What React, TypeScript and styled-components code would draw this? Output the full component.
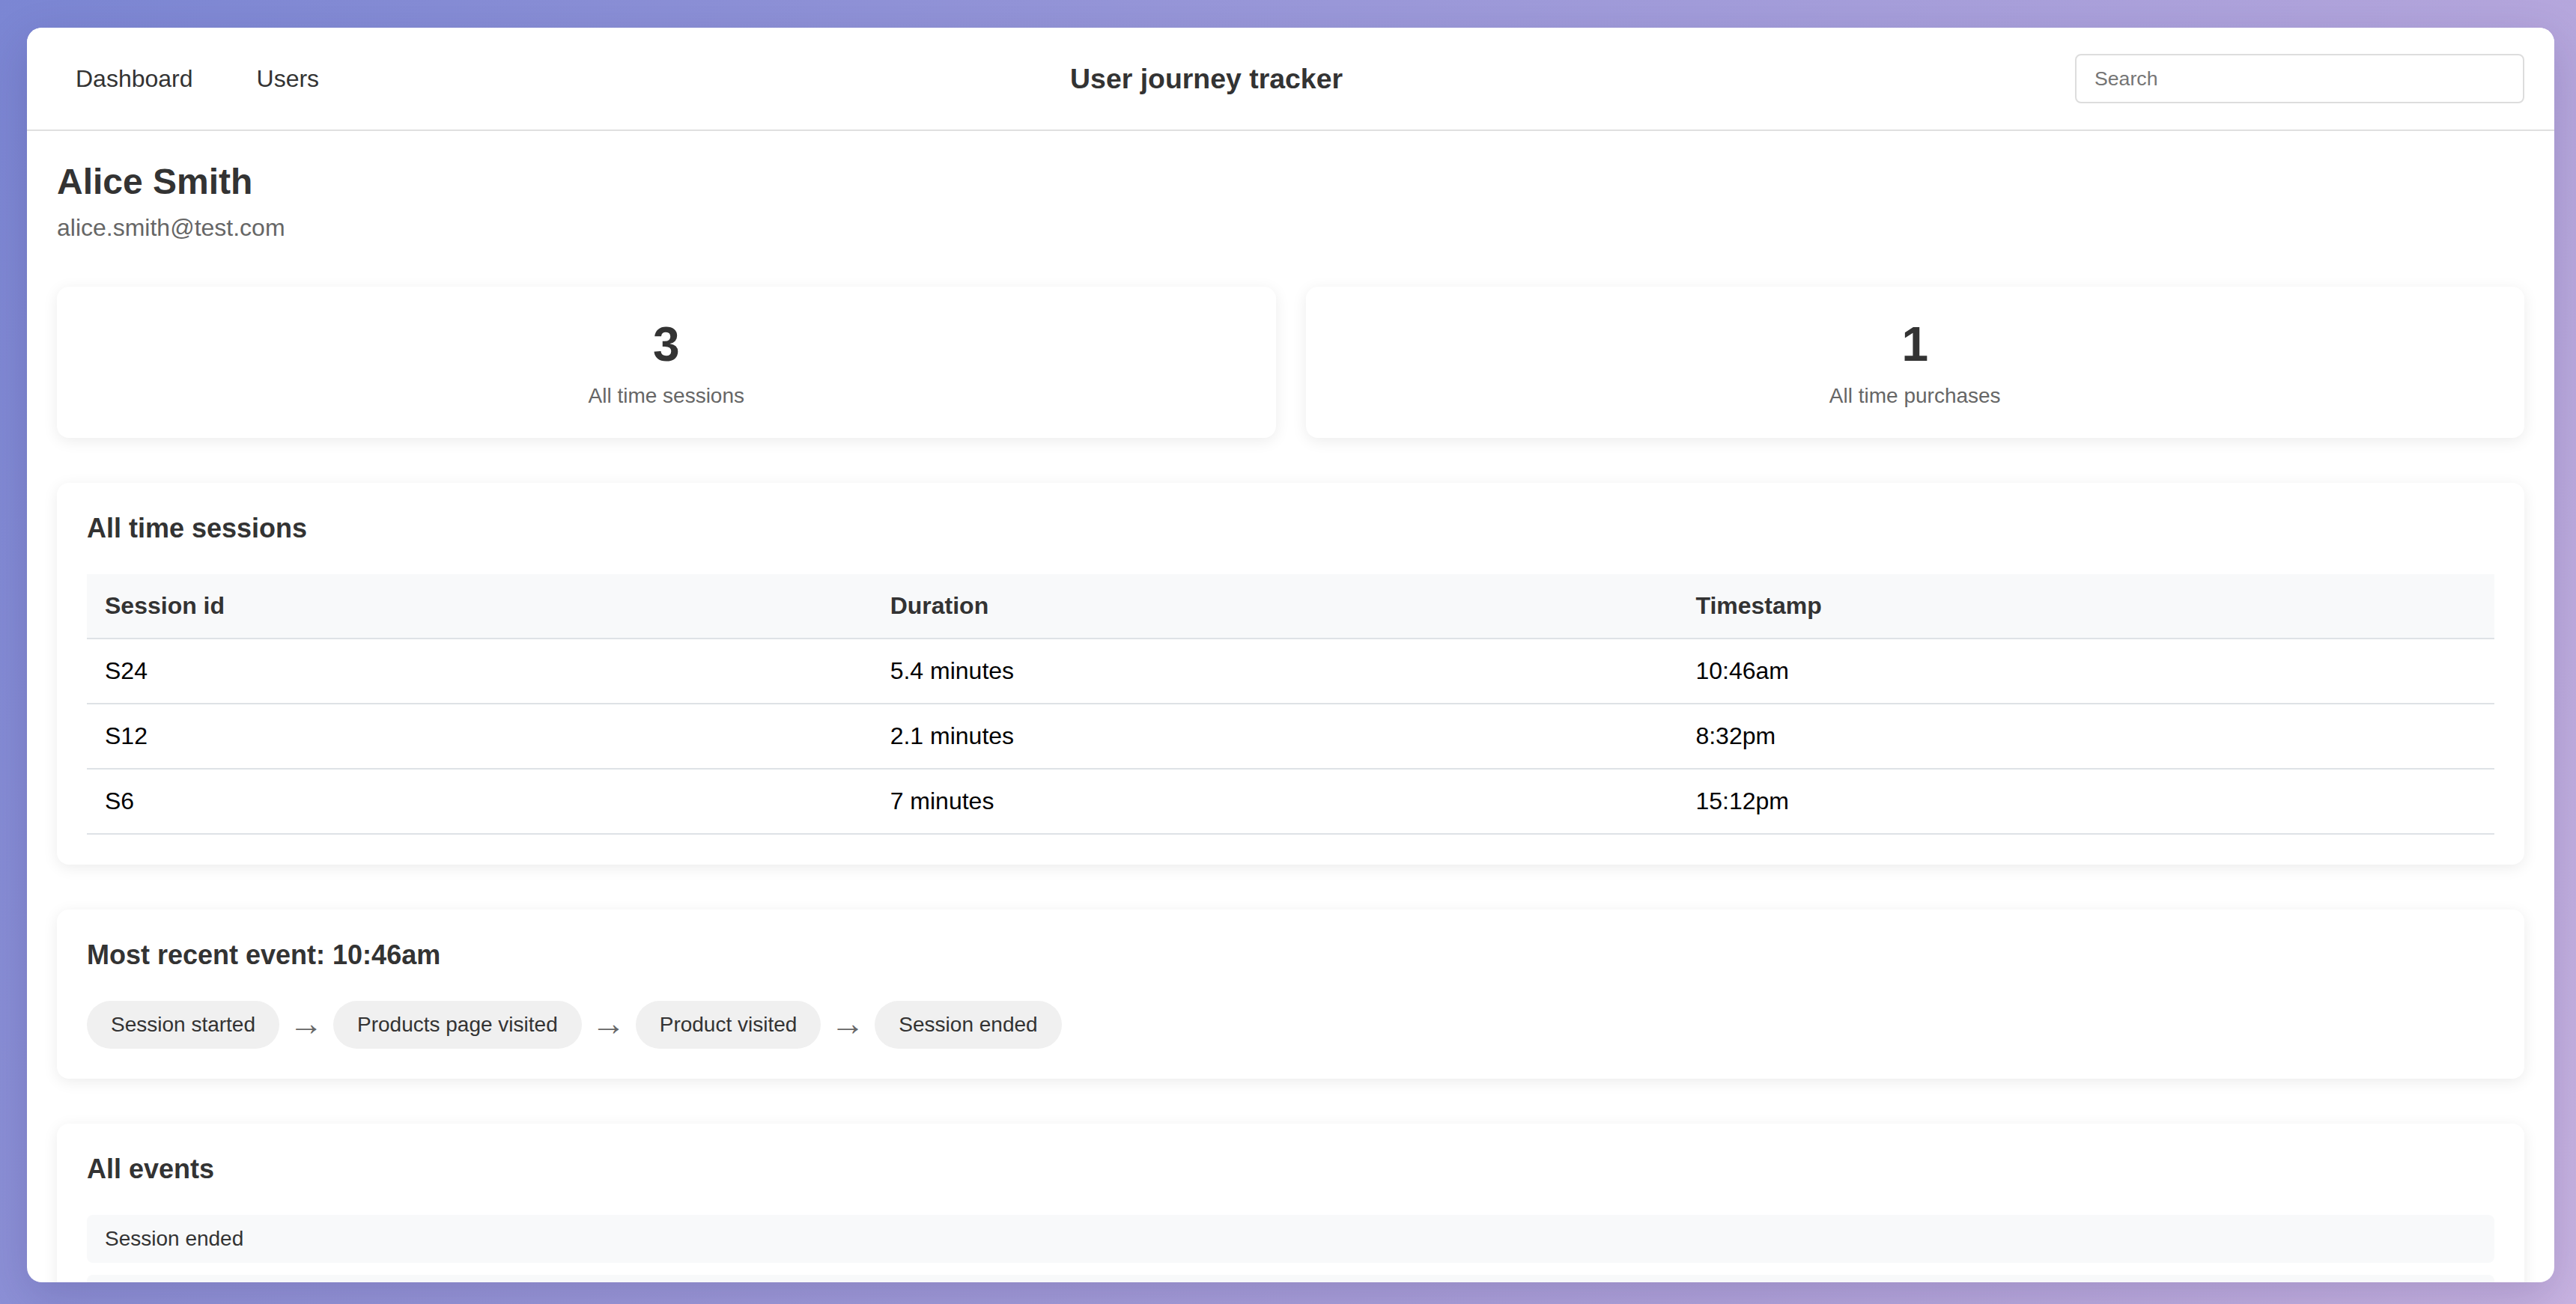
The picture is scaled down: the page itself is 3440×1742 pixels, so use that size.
import React from "react";
import styled, { createGlobalStyle } from "styled-components";

const GlobalStyle = createGlobalStyle`
  * {
    box-sizing: border-box;
  }

  html,
  body {
    margin: 0;
    padding: 0;
    height: 100%;
    overflow: hidden;
  }

  body {
    font-family: "Liberation Sans", Arial, Helvetica, sans-serif;
  }
`;

const sessions = [
  { id: "S24", duration: "5.4 minutes", time: "10:46am" },
  { id: "S12", duration: "2.1 minutes", time: "8:32pm" },
  { id: "S6", duration: "7 minutes", time: "15:12pm" },
];

const journey = [
  "Session started",
  "Products page visited",
  "Product visited",
  "Session ended",
];

const events = [
  "Session ended",
  "Product visited",
  "Products page visited",
  "Session started",
];

const App: React.FC = () => {
  return (
    <>
      <GlobalStyle />
      <Backdrop>
        <Window>
          <Header>
            <Nav>
              <NavLink href="#">Dashboard</NavLink>
              <NavLink href="#">Users</NavLink>
            </Nav>
            <Title>User journey tracker</Title>
            <Search type="text" placeholder="Search" />
          </Header>

          <Main>
            <UserName>Alice Smith</UserName>
            <UserEmail>alice.smith@test.com</UserEmail>

            <Stats>
              <StatCard>
                <StatValue>3</StatValue>
                <StatLabel>All time sessions</StatLabel>
              </StatCard>
              <StatCard>
                <StatValue>1</StatValue>
                <StatLabel>All time purchases</StatLabel>
              </StatCard>
            </Stats>

            <Card>
              <CardTitle>All time sessions</CardTitle>
              <Table>
                <thead>
                  <tr>
                    <Th>Session id</Th>
                    <Th>Duration</Th>
                    <Th>Timestamp</Th>
                  </tr>
                </thead>
                <tbody>
                  {sessions.map((s) => (
                    <tr key={s.id}>
                      <Td>{s.id}</Td>
                      <Td>{s.duration}</Td>
                      <Td>{s.time}</Td>
                    </tr>
                  ))}
                </tbody>
              </Table>
            </Card>

            <Card>
              <CardTitle>Most recent event: 10:46am</CardTitle>
              <Journey>
                {journey.map((step, i) => (
                  <React.Fragment key={step}>
                    {i > 0 && <Arrow>→</Arrow>}
                    <Pill>{step}</Pill>
                  </React.Fragment>
                ))}
              </Journey>
            </Card>

            <Card>
              <CardTitle>All events</CardTitle>
              <EventList>
                {events.map((e) => (
                  <EventItem key={e}>{e}</EventItem>
                ))}
              </EventList>
            </Card>
          </Main>
        </Window>
      </Backdrop>
    </>
  );
};

export default App;

const Backdrop = styled.div`
  height: 100vh;
  padding: 37px 29px 29px 36px;
  background: linear-gradient(120deg, #7b86d3 0%, #9a98d9 40%, #b3a5dc 75%, #c9b4e2 100%);
  display: flex;
`;

const Window = styled.div`
  flex: 1;
  display: flex;
  flex-direction: column;
  background: #ffffff;
  border-radius: 20px;
  overflow: hidden;
  box-shadow: 0 20px 60px rgba(40, 30, 90, 0.18);
`;

const Header = styled.header`
  display: flex;
  align-items: center;
  justify-content: space-between;
  height: 138px;
  flex-shrink: 0;
  padding: 0 40px;
  border-bottom: 2px solid #e0e0e0;
  background: #ffffff;
`;

const Nav = styled.nav`
  display: flex;
  align-items: center;
  gap: 35px;
`;

const NavLink = styled.a`
  padding: 16px 25px;
  font-size: 32px;
  color: #333;
  text-decoration: none;
`;

const Title = styled.h3`
  margin: 0;
  font-size: 37.44px;
  font-weight: bold;
  color: #333;
`;

const Search = styled.input`
  width: 600px;
  height: 66px;
  padding: 0 24px;
  border: 2px solid #ddd;
  border-radius: 8px;
  font-family: "Liberation Sans", Arial, sans-serif;
  font-size: 26.67px;
  color: #333;
  outline: none;

  &::placeholder {
    color: #757575;
  }
`;

const Main = styled.main`
  flex: 1;
  overflow: hidden;
  padding: 40px 40px;
`;

const UserName = styled.h1`
  margin: 0;
  font-size: 48px;
  font-weight: bold;
  color: #333;
`;

const UserEmail = styled.p`
  margin: 16px 0 0;
  font-size: 32px;
  color: #666;
`;

const Stats = styled.div`
  display: grid;
  grid-template-columns: 1fr 1fr;
  gap: 40px;
  margin-top: 60px;
`;

const CardBase = styled.div`
  background: #ffffff;
  border-radius: 16px;
  box-shadow: 0 4px 20px rgba(0, 0, 0, 0.08);
  padding: 40px;
`;

const StatCard = styled(CardBase)`
  text-align: center;
`;

const StatValue = styled.div`
  font-size: 64px;
  font-weight: bold;
  color: #333;
  margin-bottom: 16px;
`;

const StatLabel = styled.div`
  font-size: 28px;
  color: #666;
`;

const Card = styled(CardBase)`
  margin-top: 60px;
`;

const CardTitle = styled.h3`
  margin: 0 0 40px;
  font-size: 36px;
  font-weight: bold;
  color: #333;
`;

const Table = styled.table`
  width: 100%;
  border-collapse: collapse;
  font-size: 32px;
`;

const Th = styled.th`
  text-align: left;
  padding: 24px;
  background: #f8f9fa;
  color: #333;
  font-weight: bold;
  border-bottom: 2px solid #dee2e6;
`;

const Td = styled.td`
  text-align: left;
  padding: 24px;
  color: #000;
  border-bottom: 2px solid #dee2e6;
`;

const Journey = styled.div`
  display: flex;
  align-items: center;
  gap: 20px;
`;

const Pill = styled.span`
  padding: 16px 32px;
  border-radius: 32px;
  background: #f0f0f0;
  font-size: 28px;
  line-height: 32px;
  color: #333;
`;

const Arrow = styled.span`
  display: flex;
  align-items: center;
  justify-content: center;
  width: 32px;
  height: 64px;
  font-size: 46px;
  line-height: 1;
  color: #666;
  padding-bottom: 4px;
`;

const EventList = styled.div`
  display: flex;
  flex-direction: column;
  gap: 16px;
`;

const EventItem = styled.div`
  padding: 16px 24px;
  border-radius: 8px;
  background: #f8f9fa;
  font-size: 28px;
  line-height: 32px;
  color: #333;
`;
